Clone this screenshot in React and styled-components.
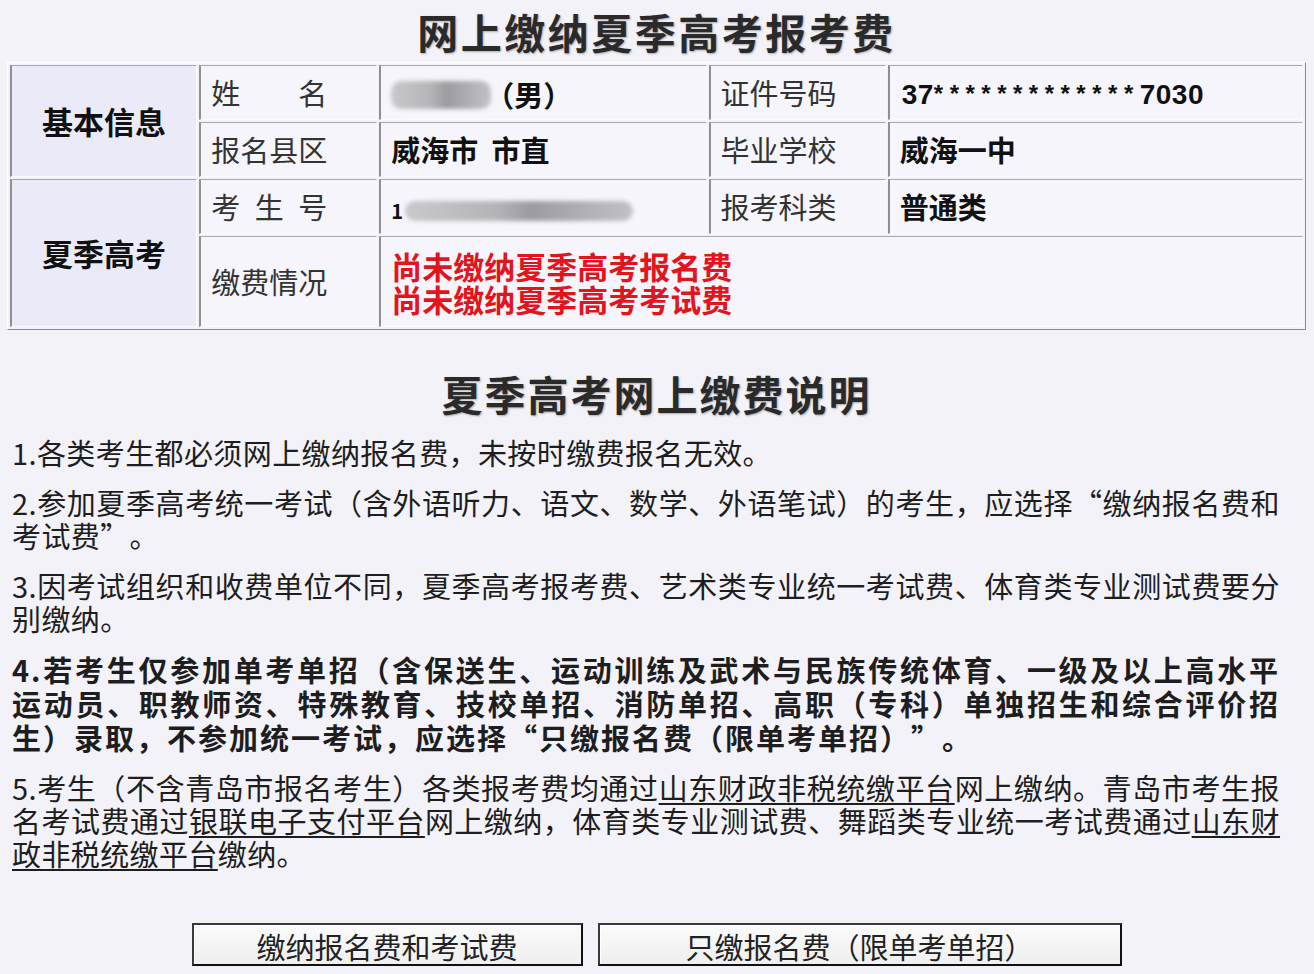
import styled, { createGlobalStyle } from 'styled-components';

const GlobalStyle = createGlobalStyle`
  * { box-sizing: border-box; }
  body {
    margin: 0;
    background: #f3f2f9;
    color: #222;
    font-family: "Noto Sans CJK SC", "Noto Sans", sans-serif;
    text-spacing-trim: space-all;
  }
`;

function App() {
  return (
    <Page>
      <GlobalStyle />
      <Title>网上缴纳夏季高考报考费</Title>

      <InfoTable>
        <colgroup>
          <Col $w={187} />
          <Col $w={178} />
          <Col $w={327} />
          <Col $w={177} />
          <Col $w={415} />
        </colgroup>
        <tbody>
          <Row $h={55}>
            <Cell $head rowSpan={2}>基本信息</Cell>
            <Cell>姓　　名</Cell>
            <Cell $value>
              <Blur $w={100} $h={28} />
              <Gender>（男）</Gender>
            </Cell>
            <Cell>证件号码</Cell>
            <Cell $value>
              <IdNumber>
                37<Mask>*************</Mask>7030
              </IdNumber>
            </Cell>
          </Row>
          <Row $h={55}>
            <Cell>报名县区</Cell>
            <Cell $value>威海市&nbsp;&nbsp;市直</Cell>
            <Cell>毕业学校</Cell>
            <Cell $value>威海一中</Cell>
          </Row>
          <Row $h={55}>
            <Cell $head rowSpan={2}>夏季高考</Cell>
            <Cell>考&ensp;生&ensp;号</Cell>
            <Cell $value>
              <SmallDigit>1</SmallDigit>
              <Blur $w={228} $h={20} />
            </Cell>
            <Cell>报考科类</Cell>
            <Cell $value>普通类</Cell>
          </Row>
          <Row $h={91}>
            <Cell>缴费情况</Cell>
            <Cell $value colSpan={3}>
              <Warning>
                尚未缴纳夏季高考报名费
                <br />
                尚未缴纳夏季高考考试费
              </Warning>
            </Cell>
          </Row>
        </tbody>
      </InfoTable>

      <SubTitle>夏季高考网上缴费说明</SubTitle>

      <Notes>
        <Para>
          <Line>1.各类考生都必须网上缴纳报名费，未按时缴费报名无效。</Line>
        </Para>
        <Para>
          <Line $fill>2.参加夏季高考统一考试（含外语听力、语文、数学、外语笔试）的考生，应选择“缴纳报名费和</Line>
          <Line>考试费”。</Line>
        </Para>
        <Para>
          <Line $fill>3.因考试组织和收费单位不同，夏季高考报考费、艺术类专业统一考试费、体育类专业测试费要分</Line>
          <Line>别缴纳。</Line>
        </Para>
        <Para $bold>
          <Line $fill>4.若考生仅参加单考单招（含保送生、运动训练及武术与民族传统体育、一级及以上高水平</Line>
          <Line $fill>运动员、职教师资、特殊教育、技校单招、消防单招、高职（专科）单独招生和综合评价招</Line>
          <Line>生）录取，不参加统一考试，应选择“只缴报名费（限单考单招）”。</Line>
        </Para>
        <Para>
          <Line $fill>
            5.考生（不含青岛市报名考生）各类报考费均通过<Link>山东财政非税统缴平台</Link>网上缴纳。青岛市考生报
          </Line>
          <Line $fill>
            名考试费通过<Link>银联电子支付平台</Link>网上缴纳，体育类专业测试费、舞蹈类专业统一考试费通过<Link>山东财</Link>
          </Line>
          <Line>
            <Link>政非税统缴平台</Link>缴纳。
          </Line>
        </Para>
      </Notes>

      <ButtonRow>
        <PayButton $w={391}>缴纳报名费和考试费</PayButton>
        <PayButton $w={524}>只缴报名费（限单考单招）</PayButton>
      </ButtonRow>
    </Page>
  );
}

const Page = styled.main`
  width: 1314px;
  padding: 0 8px 0 7px;
`;

const Title = styled.h1`
  margin: 0;
  height: 62px;
  line-height: 62px;
  text-align: center;
  font-size: 41px;
  font-weight: 700;
  letter-spacing: 2.5px;
  color: #2a2a2a;
  text-shadow: 1px 1px 2px rgba(0, 0, 0, 0.3);
`;

const InfoTable = styled.table`
  width: 1299px;
  table-layout: fixed;
  border-collapse: separate;
  border-spacing: 2px;
  border: 1px solid;
  border-color: #ffffff #8c8c8c #8c8c8c #ffffff;
  background: #f3f2f9;
`;

const Col = styled.col`
  width: ${(p) => p.$w}px;
`;

const Row = styled.tr`
  height: ${(p) => p.$h}px;
`;

const Cell = styled.td`
  padding: 0 10px;
  border-style: solid;
  border-width: 1px 1px 1px 2px;
  border-color: #a9a9a9 #fbfbfd #fbfbfd #8f8f8f;
  background: ${(p) => (p.$head ? '#ebeaf8' : '#f6f5fb')};
  font-size: ${(p) => (p.$head ? '31px' : '29px')};
  font-weight: ${(p) => (p.$head || p.$value ? 700 : 400)};
  color: ${(p) => (p.$head || p.$value ? '#111' : '#333')};
  text-align: ${(p) => (p.$head ? 'center' : 'left')};
  vertical-align: middle;
  white-space: nowrap;
  line-height: 1.2;
`;

const Blur = styled.span`
  display: inline-block;
  vertical-align: middle;
  width: ${(p) => p.$w}px;
  height: ${(p) => p.$h}px;
  border-radius: 10px;
  background: linear-gradient(90deg, #c9c9cc, #b4b4b8 40%, #9c9ca0 55%, #c2c2c6);
  filter: blur(2px);
`;

const Gender = styled.span`
  margin-left: -6px;
  vertical-align: middle;
`;

const SmallDigit = styled.span`
  vertical-align: middle;
  font-size: 20px;
  margin-right: 2px;
`;

const IdNumber = styled.span`
  font-family: "Liberation Sans", Arial, sans-serif;
  font-size: 28px;
  font-weight: 700;
  letter-spacing: 0.5px;
  position: relative;
  left: 2px;
`;

const Mask = styled.span`
  font-size: 24px;
  letter-spacing: 6.5px;
  position: relative;
  top: -2px;
`;

const Warning = styled.div`
  color: #e3141c;
  font-size: 31px;
  font-weight: 700;
  line-height: 33px;
`;

const SubTitle = styled.h2`
  margin: 38px 0 0;
  height: 50px;
  line-height: 50px;
  text-align: center;
  font-size: 41px;
  font-weight: 700;
  letter-spacing: 2px;
  color: #2a2a2a;
  text-shadow: 1px 1px 2px rgba(0, 0, 0, 0.3);
`;

const Notes = styled.section`
  margin-top: 18px;
  padding: 0 26px 0 5px;
`;

const Para = styled.p`
  margin: 0 0 17px;
  font-size: 29px;
  line-height: ${(p) => (p.$bold ? '34px' : '33px')};
  font-weight: ${(p) => (p.$bold ? 700 : 400)};
  letter-spacing: ${(p) => (p.$bold ? '2px' : '0.4px')};
  color: #1e1e1e;
`;

const Line = styled.span`
  display: block;
  white-space: nowrap;
  text-align: justify;
  text-align-last: ${(p) => (p.$fill ? 'justify' : 'left')};
`;

const Link = styled.span`
  text-decoration: underline;
  text-underline-offset: 3px;
  text-decoration-thickness: 2px;
`;

const ButtonRow = styled.div`
  display: flex;
  justify-content: center;
  gap: 15px;
  margin-top: 53px;
`;

const PayButton = styled.button`
  width: ${(p) => p.$w}px;
  height: 43px;
  padding: 4px 0 0;
  border: 2px solid;
  border-color: #3a3a3a #111 #111 #3a3a3a;
  background: linear-gradient(#fbfbfb, #efefef);
  box-shadow: inset 1px 1px 0 #fff;
  font-family: "Noto Sans CJK SC", "Noto Sans", sans-serif;
  font-size: 29px;
  line-height: 1;
  color: #222;
  cursor: pointer;
`;

export default App;
